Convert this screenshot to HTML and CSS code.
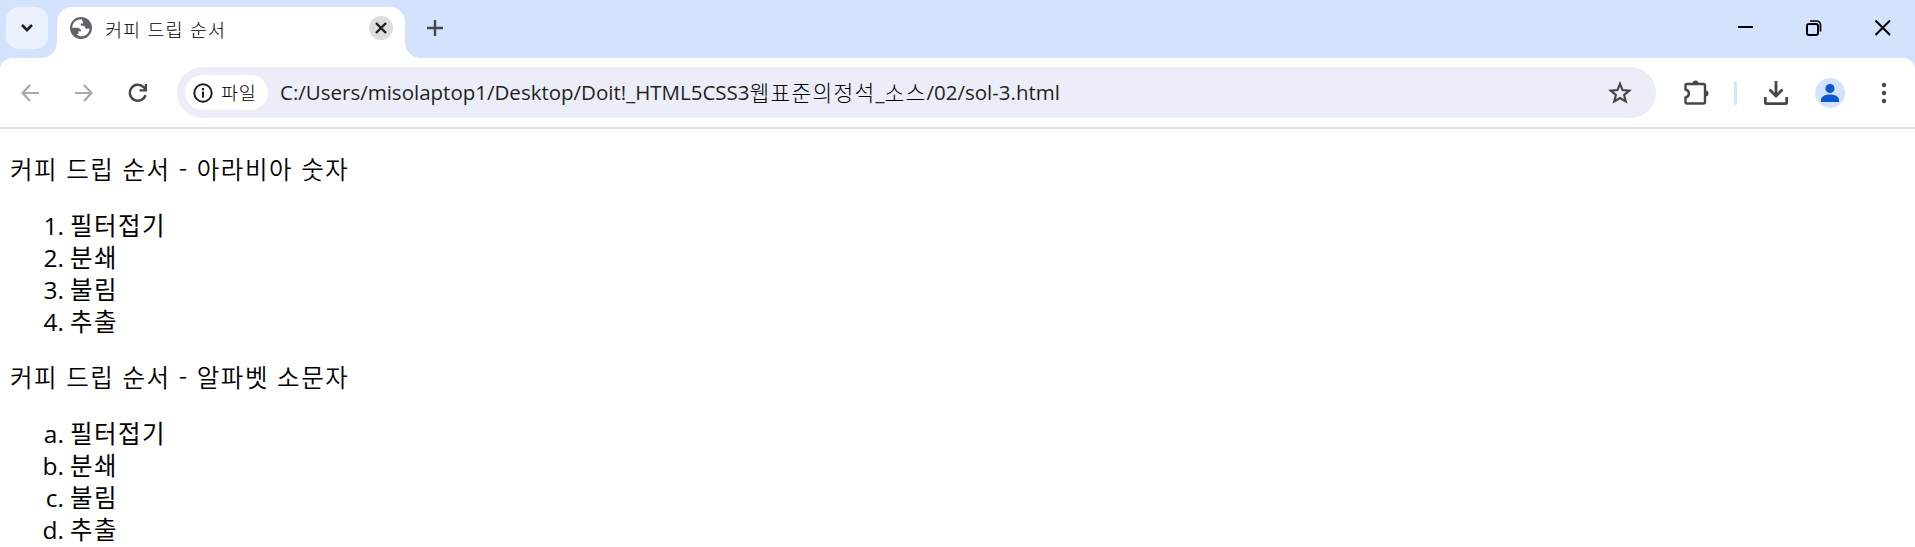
FILE: index.html
```html
<!DOCTYPE html>
<html lang="ko">
<head>
<meta charset="utf-8">
<title>커피 드립 순서</title>
<link rel="stylesheet" href="styles.css">
</head>
<body>
<header class="tabstrip">
  <button class="tab-search" aria-label="tabs"><svg width="14" height="10" viewBox="0 0 14 10"><path d="M2 2l5 5 5-5" fill="none" stroke="#1f1f1f" stroke-width="2.7"/></svg></button>
  <div class="tab">
    <svg class="globe" width="22" height="22" viewBox="0 0 22 22"><circle cx="11" cy="11" r="11" fill="#5f6368"/><path d="M11.500 2.200C6 2 2.300 6 2.200 10.800h4.600c2.500 0 4.300 1.200 4.300 3.500H8.400v3H6.300c4.500 4.300 13 1.500 13.400-6.100-.8.700-1.900.8-3.100.5-1.500-.3-1.900-1.300-2-2.900h-3.800V6.600h2.300c.2-1.400-.2-2.400-1.600-4.400z" fill="#fff"/></svg>
    <span class="tab-title">커피 드립 순서</span>
    <span class="tab-close"><svg width="12" height="12" viewBox="0 0 12 12"><path d="M1 1l10 10M11 1L1 11" stroke="#1f1f1f" stroke-width="2.4"/></svg></span>
  </div>
  <svg class="new-tab" width="16" height="16" viewBox="0 0 16 16"><path d="M8 0v16M0 8h16" stroke="#474747" stroke-width="2.4"/></svg>
  <div class="window-controls">
    <svg width="16" height="16" viewBox="0 0 16 16"><path d="M1 7h15" stroke="#000" stroke-width="2"/></svg>
    <svg width="16" height="16" viewBox="0 0 16 16"><rect x="1" y="4" width="11" height="11" rx="2" fill="none" stroke="#000" stroke-width="2"/><path d="M4 1h6.500a4 4 0 0 1 4 4v6.500" fill="none" stroke="#000" stroke-width="1.700"/></svg>
    <svg width="16" height="16" viewBox="0 0 16 16"><path d="M.5.5l14.500 14.500M15 .5L.5 15" stroke="#000" stroke-width="2"/></svg>
  </div>
</header>
<div class="toolbar-back">
<nav class="toolbar">
  <svg class="back" width="18" height="18" viewBox="0 0 18 18"><path d="M18 9H1.500M9 1L1.500 9 9 17" fill="none" stroke="#a9a9a9" stroke-width="2.200"/></svg>
  <svg class="forward" width="18" height="18" viewBox="0 0 18 18"><path d="M0 9h16.500M9 1l7.500 8L9 17" fill="none" stroke="#a9a9a9" stroke-width="2.200"/></svg>
  <svg class="reload" width="20" height="20" viewBox="0 0 20 20"><path d="M17.500 12.200A8 8 0 1 1 15.600 4.200L18 6.500" fill="none" stroke="#474747" stroke-width="2.400"/><path d="M19 1v7.500h-7.500V6.200h5.200V1z" fill="#474747"/></svg>
  <div class="omnibox">
    <div class="chip">
      <svg width="20" height="20" viewBox="0 0 20 20"><circle cx="10" cy="10" r="8.700" fill="none" stroke="#1f1f1f" stroke-width="2"/><path d="M10 8.600v6.200M10 5v2.200" stroke="#1f1f1f" stroke-width="2"/></svg>
      <span class="chip-label">파일</span>
    </div>
    <div class="url"><span class="latin">C:/Users/misolaptop1/Desktop/Doit!_HTML5CSS3</span><span class="hangul">웹표준의정석</span><span class="latin">_</span><span class="hangul">소스</span><span class="latin">/02/sol-3.html</span></div>
    <svg class="star" width="24" height="24" viewBox="0 0 24 24"><path d="M12 2.800l2.550 6.250 6.750.55-5.150 4.350 1.600 6.550L12 16.950 6.250 20.500l1.600-6.550L2.700 9.600l6.750-.55z" fill="none" stroke="#474747" stroke-width="2.200"/></svg>
  </div>
  <svg class="puzzle" width="26" height="26" viewBox="0 0 26 26"><path d="M3 4h16.500q1.500 0 1.500 1.500V22q0 1.500-1.500 1.500H3q-1.500 0-1.500-1.500v-4.500c4.500-1 4.500-7 0-8V5.500Q1.500 4 3 4z" fill="none" stroke="#474747" stroke-width="2.400"/><path d="M8.500 3.500a3 3 0 0 1 6 0zM21.500 10.500a3 3 0 0 1 0 6z" fill="#474747"/></svg>
  <span class="divider"></span>
  <svg class="download" width="24" height="26" viewBox="0 0 24 26"><path d="M12 1v14.500M5.500 9.500l6.500 6.500 6.500-6.500" fill="none" stroke="#474747" stroke-width="2.800"/><path d="M1.300 17v5.200q0 1.500 1.500 1.500h18.400q1.500 0 1.500-1.500V17" fill="none" stroke="#474747" stroke-width="2.800"/></svg>
  <svg class="avatar" width="30" height="30" viewBox="0 0 30 30"><circle cx="15" cy="15" r="15" fill="#d3e3fd"/><circle cx="15" cy="10.500" r="4.500" fill="#0b57d0"/><path d="M6 24v-2c0-7.300 18-7.300 18 0v2z" fill="#0b57d0"/></svg>
  <svg class="menu" width="6" height="22" viewBox="0 0 6 22"><g fill="#474747"><circle cx="3" cy="3" r="2.200"/><circle cx="3" cy="11" r="2.200"/><circle cx="3" cy="19" r="2.200"/></g></svg>
</nav>
</div>
<main class="page">
  <p>커피 드립 순서 - 아라비아 숫자</p>
  <ol>
    <li>필터접기</li>
    <li>분쇄</li>
    <li>불림</li>
    <li>추출</li>
  </ol>
  <p>커피 드립 순서 - 알파벳 소문자</p>
  <ol class="alpha">
    <li>필터접기</li>
    <li>분쇄</li>
    <li>불림</li>
    <li>추출</li>
  </ol>
</main>
</body>
</html>
```
FILE: styles.css
```css
* { box-sizing: border-box; }
body { margin: 0; height: 547px; overflow: hidden; background: #fff; color: #000; font-family: "Noto Sans CJK KR", sans-serif; }
svg { display: block; flex: none; }
.tabstrip { display: flex; height: 58px; background: #d3e2fd; padding: 7px 24px 0 6px; }
.tab-search { display: flex; align-items: center; justify-content: center; width: 42px; height: 42px; padding: 0; border: 0; border-radius: 13px; background: #ebf2fe; }
.tab { position: relative; display: flex; align-items: center; width: 348px; height: 51px; margin-left: 9px; padding: 0 12px 9px 13px; border-radius: 15px 15px 0 0; background: #fff; }
.tab::before, .tab::after { content: ""; position: absolute; bottom: 0; width: 15px; height: 15px; }
.tab::before { right: 100%; background: radial-gradient(circle at 0 0, transparent 14.500px, #fff 15px); }
.tab::after { left: 100%; background: radial-gradient(circle at 100% 0, transparent 14.500px, #fff 15px); }
.tab-title { margin-left: 13px; padding-top: 2px; font-size: 18.500px; font-weight: 300; line-height: 24px; letter-spacing: .9px; word-spacing: .6px; color: #000; white-space: nowrap; }
.tab-close { display: flex; align-items: center; justify-content: center; width: 24px; height: 24px; margin-left: auto; border-radius: 50%; background: #dcdcdc; }
.new-tab { margin: 13px 0 0 22px; }
.window-controls { display: flex; gap: 53px; margin: 13px 0 0 auto; }
.toolbar-back { background: #d3e2fd; }
.toolbar { display: flex; align-items: center; height: 71px; padding: 0 28px 0 21px; border-bottom: 2px solid #e0e1e0; border-radius: 12px 12px 0 0; background: #fff; }
.forward { margin-left: 36px; }
.reload { margin-left: 35px; }
.omnibox { display: flex; align-items: center; width: 1479px; height: 51px; margin-left: 29px; padding: 0 24px 0 8px; border-radius: 26px; background: #ebeef8; }
.chip { display: flex; align-items: center; width: 83px; height: 35px; padding-left: 8px; border-radius: 18px; background: #fff; }
.chip-label { margin: -2px 0 0 8px; font-size: 18.500px; font-weight: 300; line-height: 24px; letter-spacing: .8px; color: #000; }
.url { display: flex; margin: -2px 0 0 12px; line-height: 30px; color: #1f1f1f; white-space: nowrap; }
.latin { font-family: "Open Sans", sans-serif; font-size: 20.500px; }
.hangul { font-size: 21.500px; font-weight: 300; letter-spacing: 1.200px; color: #000; }
.star { margin-left: auto; }
.puzzle { margin-left: 28px; }
.divider { width: 3px; height: 24px; margin-left: 24px; border-radius: 2px; background: #d3e3fd; }
.download { margin-left: 27px; }
.avatar { margin-left: 27px; }
.menu { margin-left: 36px; }
.page { padding: 0 10px; font-size: 24.500px; font-weight: 350; line-height: 32px; letter-spacing: 1.500px; word-spacing: -.2px; }
.page p { margin: 0; padding: 24px 0; }
.page ol { margin: 0; padding: 0 0 0 60px; font-weight: 400; }
.page li::marker { font-family: "Open Sans", sans-serif; letter-spacing: 0; }
.page .alpha { list-style-type: lower-alpha; }
```
